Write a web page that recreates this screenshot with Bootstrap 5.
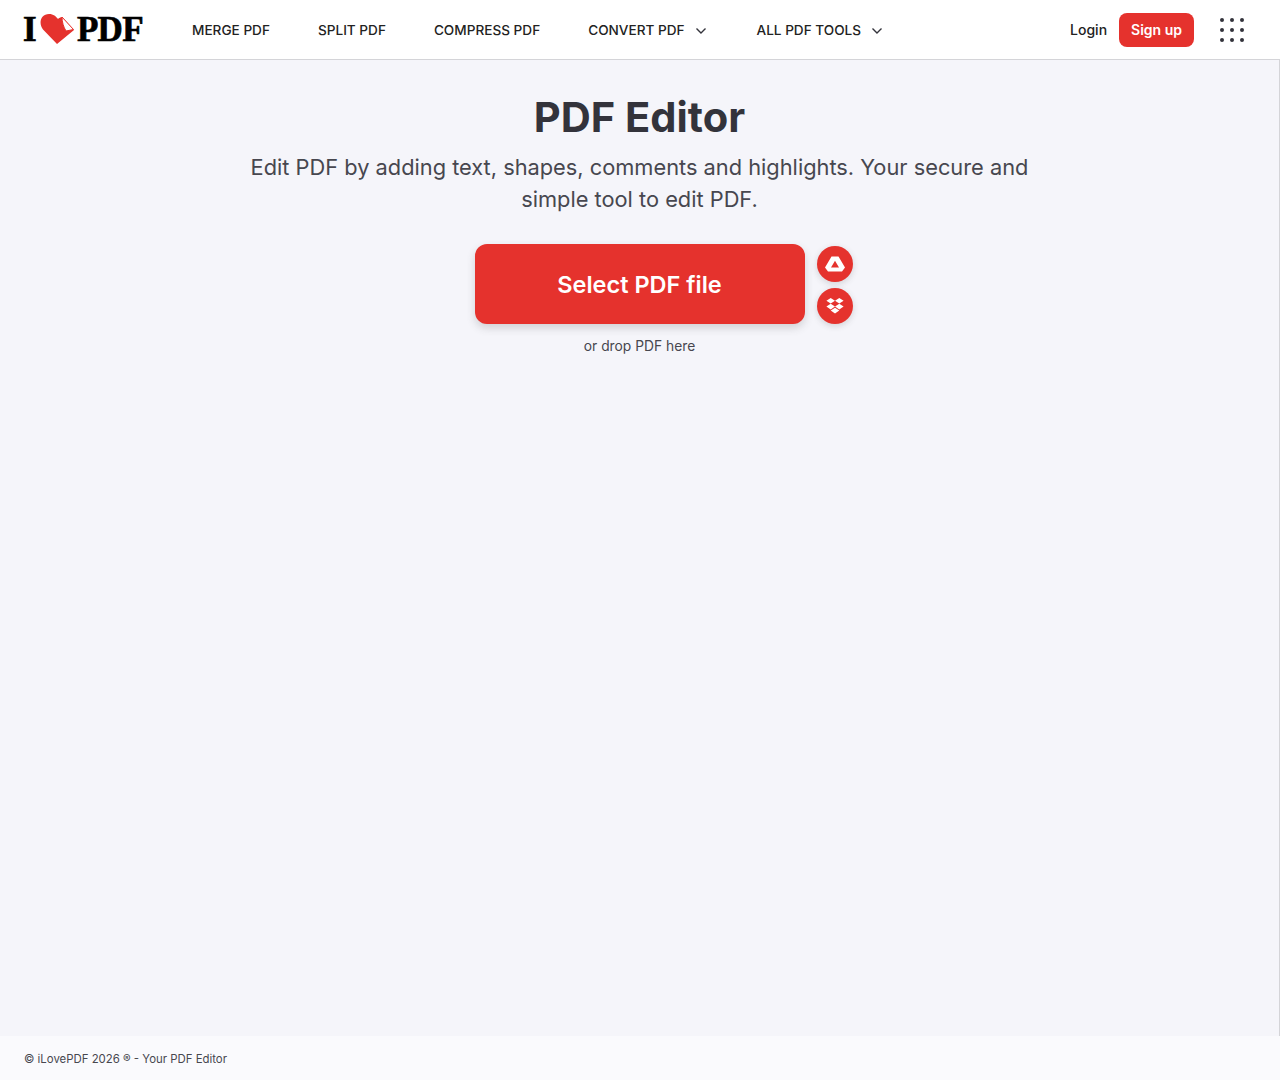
<!DOCTYPE html>
<html lang="en">
<head>
    <title>PDF Editor</title>
    <meta name="viewport" content="width=device-width, initial-scale=1">
    <link href="https://cdn.jsdelivr.net/npm/bootstrap@5.3.0/dist/css/bootstrap.min.css" rel="stylesheet">
    <script src="https://cdn.jsdelivr.net/npm/bootstrap@5.3.0/dist/js/bootstrap.bundle.min.js"></script>
    <style>
        body {
            background-color: #f5f5fa;
            font-family: "Inter", "Liberation Sans", sans-serif;
            color: #33333b;
            height: 1080px;
        }
        .site-header {
            height: 60px;
            background: #fff;
            border-bottom: 1px solid #d4d4d8;
            padding: 0 0 0 23px;
        }
        .logo-text {
            font-family: "Liberation Serif", serif;
            font-weight: 700;
            font-size: 35px;
            line-height: 1;
            color: #000;
            letter-spacing: -.7px;
            -webkit-text-stroke: 0.7px #000;
            width: 121px;
        }
        .logo-heart { margin: -1px 3px 0 4px; flex-shrink: 0; }
        .main-menu {
            margin-left: 48px;
            gap: 48px;
            padding-top: 1px;
        }
        .main-menu a {
            font-size: 13.6px;
            font-weight: 500;
            color: #222;
            text-decoration: none;
            white-space: nowrap;
        }
        .chev { margin-left: 10px; margin-right: 2px; }
        .login-link {
            font-size: 14px;
            font-weight: 500;
            color: #222;
            text-decoration: none;
        }
        .signup-btn {
            background: #e5322d;
            color: #fff;
            font-size: 14px;
            font-weight: 600;
            border-radius: 8px;
            padding: 0 12px;
            height: 34px;
            line-height: 34px;
            margin-left: 12px;
            text-decoration: none;
        }
        .apps-grid {
            display: grid;
            grid-template-columns: repeat(3, 4px);
            gap: 6px;
            margin-left: 26px;
            margin-right: 36px;
        }
        .apps-grid span {
            width: 4px;
            height: 4px;
            border-radius: 50%;
            background: #33333b;
        }
        .page-main { border-right: 1px solid #d4d4d8; }
        .page-title {
            font-size: 41.6px;
            font-weight: 700;
            line-height: 52px;
            color: #33333b;
            margin: 31px 0 0;
        }
        .page-sub {
            font-size: 21.8px;
            font-weight: 400;
            line-height: 32px;
            color: #47474f;
            width: 800px;
            margin: 8px auto 0;
        }
        .upload-row { margin-top: 29px; margin-left: 48px; }
        .select-btn {
            width: 330px;
            height: 80px;
            background: #e5322d;
            color: #fff;
            font-size: 23.5px;
            font-weight: 600;
            border-radius: 12px;
            border: 0;
            padding-top: 2px;
            box-shadow: 0 4px 8px rgba(72, 72, 72, .2);
        }
        .cloud-stack { gap: 6px; margin-top: 2px; }
        .cloud-btn {
            width: 36px;
            height: 36px;
            border-radius: 50%;
            background: #e5322d;
            box-shadow: 0 2px 6px rgba(72, 72, 72, .2);
        }
        .drop-hint {
            font-size: 13.8px;
            color: #47474f;
            margin-top: 12px;
        }
        .site-footer {
            height: 44px;
            background: #fafafd;
            font-size: 11.4px;
            color: #47474f;
            padding: 4px 24px 0;
        }
    </style>
</head>
<body class="d-flex flex-column">

    <!-- Header -->
    <header class="site-header d-flex align-items-center flex-shrink-0">
        <a href="#" class="logo-text d-flex align-items-center text-decoration-none">
            <span>I</span>
            <svg class="logo-heart" width="34" height="30" viewBox="0 0 34 30">
                <path d="M17 30 L3 15.5 C-2 9 1 0 9 0 C13.5 0 16 2.5 18 5 C19 4 20.5 3 22 3 L34 16 Z" fill="#e5322d"/>
                <path d="M22 3 L33.5 15.5 L26 17 C23.5 13 22 8 22 3 Z" fill="#fff" stroke="#e5322d" stroke-width="1"/>
            </svg>
            <span>PDF</span>
        </a>
        <nav class="main-menu d-flex align-items-center">
            <a href="#">MERGE PDF</a>
            <a href="#">SPLIT PDF</a>
            <a href="#">COMPRESS PDF</a>
            <a href="#">CONVERT PDF<svg class="chev" width="12" height="8" viewBox="0 0 12 8"><path d="M1.5 1.5 L6 6 L10.5 1.5" fill="none" stroke="#33333b" stroke-width="1.4"/></svg></a>
            <a href="#">ALL PDF TOOLS<svg class="chev" width="12" height="8" viewBox="0 0 12 8"><path d="M1.5 1.5 L6 6 L10.5 1.5" fill="none" stroke="#33333b" stroke-width="1.4"/></svg></a>
        </nav>
        <div class="ms-auto d-flex align-items-center">
            <a href="#" class="login-link">Login</a>
            <a href="#" class="signup-btn">Sign up</a>
            <div class="apps-grid">
                <span></span><span></span><span></span>
                <span></span><span></span><span></span>
                <span></span><span></span><span></span>
            </div>
        </div>
    </header>

    <!-- Main -->
    <main class="page-main flex-grow-1 text-center">
        <h1 class="page-title">PDF Editor</h1>
        <h2 class="page-sub">Edit PDF by adding text, shapes, comments and highlights. Your secure and simple tool to edit PDF.</h2>
        <div class="upload-row d-flex justify-content-center align-items-start gap-2">
            <button class="select-btn">Select PDF file</button>
            <div class="cloud-stack d-flex flex-column ms-1">
                <a href="#" class="cloud-btn d-flex align-items-center justify-content-center">
                    <svg width="20" height="16" viewBox="0 0 20 16">
                        <path fill-rule="evenodd" d="M6.5 .5 H13.5 L20 11.5 L17 15.5 H3 L0 11.5 Z M10 4.8 L6 11.5 H14 Z" fill="#fff"/>
                    </svg>
                </a>
                <a href="#" class="cloud-btn d-flex align-items-center justify-content-center">
                    <svg width="18" height="16" viewBox="0 0 18 16">
                        <path d="M4.7 0 L9 2.8 L4.7 5.6 L.4 2.8 Z M13.3 0 L17.6 2.8 L13.3 5.6 L9 2.8 Z M4.7 5.8 L9 8.6 L4.7 11.4 L.4 8.6 Z M13.3 5.8 L17.6 8.6 L13.3 11.4 L9 8.6 Z M4.7 12.4 L9 9.7 L13.3 12.4 L9 15.4 Z" fill="#fff"/>
                    </svg>
                </a>
            </div>
        </div>
        <div class="drop-hint">or drop PDF here</div>
    </main>

    <!-- Footer -->
    <footer class="site-footer d-flex align-items-center flex-shrink-0">
        © iLovePDF 2026 ® - Your PDF Editor
    </footer>

</body>
</html>
